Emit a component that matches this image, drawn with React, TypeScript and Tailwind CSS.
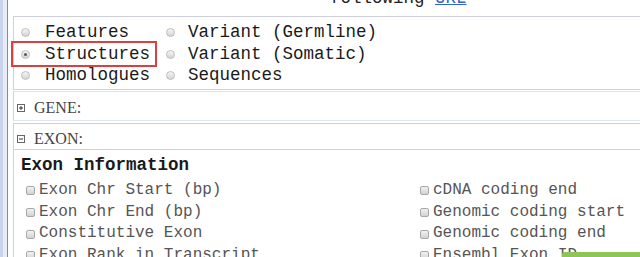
const mono = { fontFamily: '"Liberation Mono", "DejaVu Sans Mono", monospace' };

function Radio({ checked = false }: { checked?: boolean }) {
  return (
    <span className="flex h-[9px] w-[9px] shrink-0 items-center justify-center rounded-full border border-[#bdbdbd] bg-linear-to-b from-[#f6f6f6] to-[#d4d4d4]">
      {checked && <span className="h-[3px] w-[3px] rounded-full bg-[#555]" />}
    </span>
  );
}

function Check() {
  return (
    <span className="h-[9px] w-[9px] shrink-0 rounded-[2px] border border-[#a8a8a8] bg-linear-to-b from-[#f2f2f2] to-[#d2d2d2]" />
  );
}

function Toggle({ open }: { open: boolean }) {
  return (
    <svg width="8" height="8" viewBox="0 0 8 8" className="shrink-0">
      <rect x="0.5" y="0.5" width="7" height="7" fill="#fff" stroke="#666" />
      <line x1="2" y1="4" x2="6" y2="4" stroke="#333" />
      {!open && <line x1="4" y1="2" x2="4" y2="6" stroke="#333" />}
    </svg>
  );
}

function RadioItem({ label, gap, checked, boxed }: { label: string; gap: string; checked?: boolean; boxed?: boolean }) {
  return (
    <div className={`relative flex w-fit items-center ${gap}`}>
      <Radio checked={checked} />
      <span className="whitespace-pre">{label}</span>
      {boxed && <div className="absolute -left-[10px] -right-[7px] -top-[3px] -bottom-[2px] border-2 border-[#d8413f]" />}
    </div>
  );
}

const left = ["Exon Chr Start (bp)", "Exon Chr End (bp)", "Constitutive Exon", "Exon Rank in Transcript"];
const right = ["cDNA coding end", "Genomic coding start", "Genomic coding end", "Ensembl Exon ID"];

export default function App() {
  return (
    <div className="relative flex h-[257px] w-[640px] overflow-hidden bg-white">
      <div className="flex shrink-0">
        <div className="w-[3px] bg-[#c8d3ee]" />
        <div className="w-[4px] bg-[#e6ebf6]" />
        <div className="w-[1px] bg-[#8c8c8c]" />
      </div>

      <div className="min-w-0 flex-1 pl-[5px]">
        <div className="h-[16px] overflow-hidden">
          <div className="-mt-[12px] whitespace-pre pl-[317px] text-[17.5px] leading-[20px] text-[#222]" style={mono}>
            following <span className="text-[#3366cc] underline">URL</span>
          </div>
        </div>

        <div className="border-y border-l border-[#d0d0dc] pb-[2px] pl-[7px] pt-[5px] text-[17.5px] leading-[21.5px] text-[#1a1a1a]" style={mono}>
          <div className="grid grid-cols-[145px_auto]">
            <RadioItem label="Features" gap="gap-[15px]" />
            <RadioItem label="Variant (Germline)" gap="gap-[13px]" />
            <RadioItem label="Structures" gap="gap-[15px]" checked boxed />
            <RadioItem label="Variant (Somatic)" gap="gap-[13px]" />
            <RadioItem label="Homologues" gap="gap-[15px]" />
            <RadioItem label="Sequences" gap="gap-[13px]" />
          </div>
        </div>

        <div
          className="mt-[1px] flex items-center gap-[9px] border-y border-l border-t-[#dde3f0] border-b-[#dde3f0] border-l-[#d0d0dc] pb-[2px] pl-[3px] pt-[6px] text-[16px] leading-[20px] text-[#444]"
          style={{ fontFamily: '"Liberation Serif", serif' }}
        >
          <Toggle open={false} />
          <span>GENE:</span>
        </div>

        <div className="mt-[2px] border-l border-t border-[#d0d0dc]">
          <div
            className="flex items-center gap-[9px] border-b border-[#d0d0dc] pl-[3px] pt-[5px] text-[16px] leading-[20px] text-[#444]"
            style={{ fontFamily: '"Liberation Serif", serif' }}
          >
            <Toggle open />
            <span>EXON:</span>
          </div>
          <div className="mt-[5px] pl-[7px] text-[17.5px] font-bold leading-[21.5px] text-[#1a1a1a]" style={mono}>
            Exon Information
          </div>
          <div className="mt-[4px] grid grid-cols-[394px_auto] pl-[12px] text-[16px] leading-[21.7px] text-[#555]" style={mono}>
            {left.map((l, i) => (
              <div key={l} className="contents">
                <div className="flex items-center gap-[4px] whitespace-pre">
                  <Check />
                  <span>{l}</span>
                </div>
                <div className="flex items-center gap-[4px] whitespace-pre">
                  <Check />
                  <span>{right[i]}</span>
                </div>
              </div>
            ))}
          </div>
        </div>
      </div>

      <div className="absolute bottom-0 right-0 h-[5px] w-[78px] rounded-tl-[2px] bg-[#8fc556]" />
    </div>
  );
}
